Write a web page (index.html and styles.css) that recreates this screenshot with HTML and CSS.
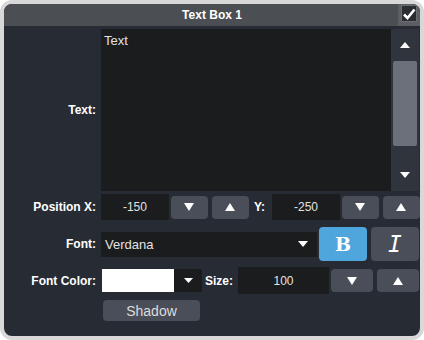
FILE: index.html
```html
<!DOCTYPE html>
<html lang="en">
<head>
    <meta charset="UTF-8">
    <title>Text Box 1</title>
    <link rel="stylesheet" href="styles.css">
</head>
<body>
    <div class="panel">
        <div class="titlebar">
            <div class="title">Text Box 1</div>
            <div class="check-area">
                <div class="checkbox">
                    <svg width="14" height="14" viewBox="0 0 14 14"><path d="M2 7.5 L5.5 11 L12.5 2.5" fill="none" stroke="#fff" stroke-width="2.6" stroke-linejoin="miter"/></svg>
                </div>
            </div>
        </div>

        <div class="row row-text">
            <div class="label">Text:</div>
            <div class="textarea">Text</div>
            <div class="scrollbar">
                <div class="scroll-arrow"><svg width="10" height="6" viewBox="0 0 10 6"><polygon points="0,6 10,6 5,0" fill="#fff"/></svg></div>
                <div class="scroll-track"><div class="scroll-thumb"></div></div>
                <div class="scroll-arrow"><svg width="10" height="6" viewBox="0 0 10 6"><polygon points="0,0 10,0 5,6" fill="#fff"/></svg></div>
            </div>
        </div>

        <div class="row row-pos">
            <div class="label">Position X:</div>
            <div class="field field-pos">-150</div>
            <div class="btn btn-step"><svg width="10" height="8" viewBox="0 0 10 8"><polygon points="0,0 10,0 5,8" fill="#fff"/></svg></div>
            <div class="btn btn-step gap-4"><svg width="10" height="8" viewBox="0 0 10 8"><polygon points="0,8 10,8 5,0" fill="#fff"/></svg></div>
            <div class="label-inline">Y:</div>
            <div class="field field-pos">-250</div>
            <div class="btn btn-step"><svg width="10" height="8" viewBox="0 0 10 8"><polygon points="0,0 10,0 5,8" fill="#fff"/></svg></div>
            <div class="btn btn-step gap-4"><svg width="10" height="8" viewBox="0 0 10 8"><polygon points="0,8 10,8 5,0" fill="#fff"/></svg></div>
        </div>

        <div class="row row-font">
            <div class="label">Font:</div>
            <div class="select">
                <span>Verdana</span>
                <svg width="10" height="6" viewBox="0 0 10 6"><polygon points="0,0 10,0 5,6" fill="#fff"/></svg>
            </div>
            <div class="btn btn-style active"><span class="glyph-b">B</span></div>
            <div class="btn btn-style gap-4"><span class="glyph-i">I</span></div>
        </div>

        <div class="row row-color">
            <div class="label">Font Color:</div>
            <div class="swatch"></div>
            <div class="swatch-drop"><svg width="9" height="5" viewBox="0 0 9 5"><polygon points="0,0 9,0 4.5,5" fill="#fff"/></svg></div>
            <div class="label-inline size-label">Size:</div>
            <div class="field field-size">100</div>
            <div class="btn btn-size"><svg width="10" height="8" viewBox="0 0 10 8"><polygon points="0,0 10,0 5,8" fill="#fff"/></svg></div>
            <div class="btn btn-size gap-4"><svg width="10" height="8" viewBox="0 0 10 8"><polygon points="0,8 10,8 5,0" fill="#fff"/></svg></div>
        </div>

        <div class="row row-shadow">
            <div class="label"></div>
            <div class="btn btn-shadow">Shadow</div>
        </div>
    </div>
</body>
</html>
```
FILE: styles.css
```css
:root {
    --body-bg: #272b33;
    --field-bg: #1b1c1e;
    --btn-bg: #4a4e58;
    --title-bg: #4b4f53;
    --accent: #4ea6dd;
    --text-light: #e2e2e2;
}

* {
    box-sizing: border-box;
}

body {
    margin: 0;
    background: #ffffff;
    font-family: 'Liberation Sans', Arial, sans-serif;
}

.panel {
    width: 424px;
    height: 340px;
    border: 4px solid #d8d8d8;
    border-radius: 12px;
    background: var(--body-bg);
    overflow: hidden;
}

.titlebar {
    height: 22px;
    display: flex;
    background: var(--title-bg);
}

.title {
    flex: 1;
    padding-left: 22px;
    color: #ffffff;
    font-weight: bold;
    font-size: 12px;
    line-height: 22px;
    text-align: center;
}

.check-area {
    width: 22px;
    background: #5b5f63;
    display: flex;
    justify-content: center;
    padding-top: 1px;
}

.checkbox {
    width: 16px;
    height: 17px;
    background: #2a2c30;
    border: 1px solid #6a6e72;
    display: flex;
    align-items: center;
    justify-content: center;
}

.row {
    display: flex;
    align-items: center;
}

.label {
    width: 92px;
    margin-right: 5px;
    text-align: right;
    color: #ffffff;
    font-weight: bold;
    font-size: 12px;
    flex-shrink: 0;
}

.label-inline {
    color: #ffffff;
    font-weight: bold;
    font-size: 12px;
    margin: 0 7px 0 5px;
}

/* text row */
.row-text {
    margin-top: 3px;
    height: 162px;
    align-items: stretch;
}

.row-text .label {
    display: flex;
    align-items: center;
    justify-content: flex-end;
}

.textarea {
    width: 290px;
    background: var(--field-bg);
    color: var(--text-light);
    font-size: 13px;
    padding: 4px 3px;
}

.scrollbar {
    width: 28px;
    background: #30343c;
    display: flex;
    flex-direction: column;
    align-items: center;
}

.scroll-arrow {
    height: 32px;
    display: flex;
    align-items: center;
    justify-content: center;
}

.scroll-track {
    flex: 1;
    width: 100%;
    padding: 0 2px;
}

.scroll-thumb {
    height: 85px;
    background: #6c707a;
    border-radius: 2px;
}

/* position row */
.row-pos {
    margin-top: 3px;
    height: 26px;
}

.field {
    height: 100%;
    background: var(--field-bg);
    color: var(--text-light);
    font-size: 12px;
    display: flex;
    align-items: center;
    justify-content: center;
}

.field-pos {
    width: 68px;
    margin-right: 2px;
}

.btn {
    background: var(--btn-bg);
    border-radius: 4px;
    display: flex;
    align-items: center;
    justify-content: center;
    flex-shrink: 0;
}

.btn-step {
    width: 37px;
    height: 23px;
}

.gap-4 {
    margin-left: 4px;
}

/* font row */
.row-font {
    margin-top: 7px;
    height: 34px;
}

.select {
    width: 216px;
    height: 25px;
    margin-right: 2px;
    background: var(--field-bg);
    color: var(--text-light);
    font-size: 13px;
    display: flex;
    align-items: center;
    justify-content: space-between;
    padding: 0 9px 0 4px;
}

.btn-style {
    width: 48px;
    height: 34px;
}

.btn-style.active {
    background: var(--accent);
}

.glyph-b {
    font-family: 'DejaVu Serif', serif;
    font-weight: bold;
    font-size: 19px;
    color: #ffffff;
}

.glyph-i {
    font-family: 'DejaVu Sans Mono', monospace;
    font-style: italic;
    font-size: 23px;
    color: #ffffff;
}

/* color row */
.row-color {
    margin-top: 6px;
    height: 27px;
}

.swatch {
    width: 72px;
    height: 23px;
    margin-left: 1px;
    background: #ffffff;
}

.swatch-drop {
    width: 28px;
    height: 23px;
    background: var(--field-bg);
    display: flex;
    align-items: center;
    justify-content: center;
}

.size-label {
    margin: 0 5px 0 3px;
}

.field-size {
    width: 91px;
    margin-right: 2px;
}

.btn-size {
    width: 42px;
    height: 23px;
}

/* shadow row */
.row-shadow {
    margin-top: 6px;
}

.btn-shadow {
    width: 97px;
    height: 21px;
    margin-left: 2px;
    color: #dcdcdc;
    font-size: 14px;
}
```
